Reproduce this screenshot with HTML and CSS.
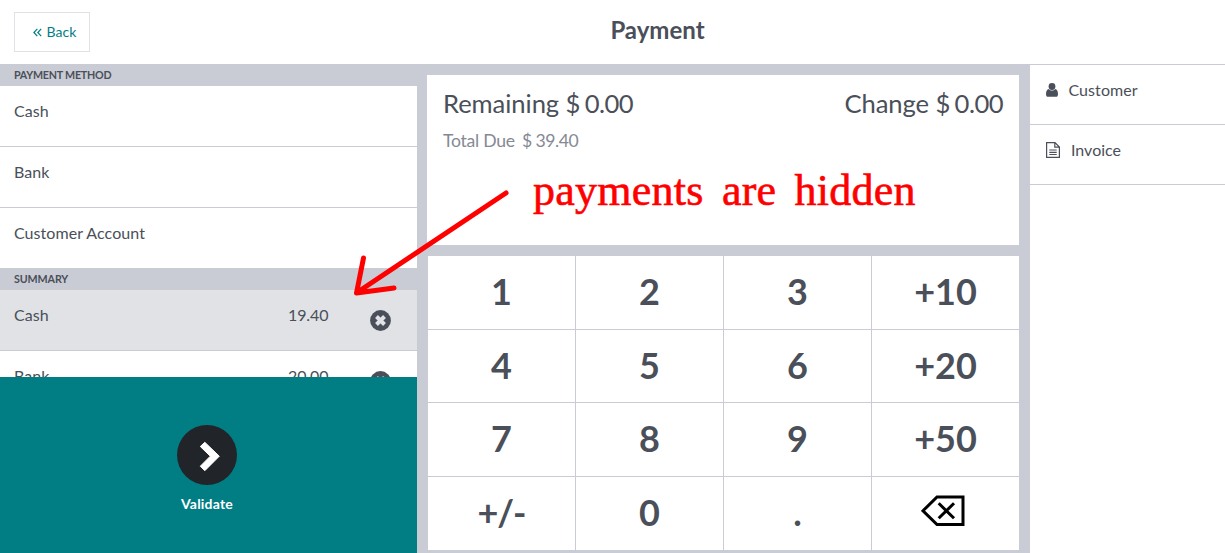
FILE: index.html
```html
<!DOCTYPE html>
<html lang="en">
<head>
<meta charset="utf-8">
<title>Payment</title>
<link rel="stylesheet" href="styles.css">
</head>
<body>
<div class="screen">
  <header class="topbar">
    <button class="back"><svg class="chevrons" width="9" height="9" viewBox="0 0 9 9"><path d="M4.3.8.9 4.5l3.400 3.700M8.2.8 4.8 4.5l3.400 3.700"/></svg><span>Back</span></button>
    <h1 class="title">Payment</h1>
  </header>
  <main class="content">
    <section class="left">
      <div class="scroll">
        <h2 class="heading">PAYMENT METHOD</h2>
        <div class="row">Cash</div>
        <div class="row">Bank</div>
        <div class="row last">Customer Account</div>
        <h2 class="heading summary">SUMMARY</h2>
        <div class="row selected"><span class="name">Cash</span><span class="amount">19.40</span>
          <svg class="remove" width="22" height="22" viewBox="0 0 22 22"><circle cx="11.500" cy="11.500" r="10.4"/><path d="m7.500 7.500 8 8m0-8-8 8"/></svg></div>
        <div class="row"><span class="name">Bank</span><span class="amount">20.00</span>
          <svg class="remove" width="22" height="22" viewBox="0 0 22 22"><circle cx="11.500" cy="11.500" r="10.4"/><path d="m7.500 7.500 8 8m0-8-8 8"/></svg></div>
      </div>
      <button class="validate">
        <svg width="60" height="60" viewBox="0 0 60 60"><circle cx="30" cy="30" r="30" fill="#212529"/><path d="M27.8 17.3 42.3 31.2 27.8 45.7 23.3 41.2 33.3 31.2 23.3 21.5Z" fill="#fff" stroke="#fff" stroke-linejoin="round"/></svg>
        <span>Validate</span>
      </button>
    </section>
    <section class="center">
      <div class="status">
        <div class="totals"><span>Remaining <b>$ 0.00</b></span><span>Change <b>$ 0.00</b></span></div>
        <div class="due">Total Due <b>$ 39.40</b></div>
      </div>
      <div class="numpad">
        <button>1</button><button>2</button><button>3</button><button>+10</button>
        <button>4</button><button>5</button><button>6</button><button>+20</button>
        <button>7</button><button>8</button><button>9</button><button>+50</button>
        <button class="sign">+/-</button><button>0</button><button>.</button>
        <button><svg class="erase" width="44" height="32" viewBox="0 0 44 32"><path d="M16 2H42V29.5H16L2 15.8Z"/><path d="m17.7 8.3 15.3 15m0-15-15.3 15"/></svg></button>
      </div>
    </section>
    <aside class="right">
      <div class="option"><svg width="12" height="14" viewBox="0 0 12 14"><circle cx="6" cy="3.5" r="3.4"/><path d="M2.9 6C.8 6.200 0 8.500 0 11c0 2 .8 2.800 2.200 2.800h7.600c1.400 0 2.200-.8 2.200-2.800 0-2.500-.8-4.800-2.900-5C8.300 7 7.200 7.500 6 7.500S3.700 7 2.900 6Z"/></svg><span>Customer</span></div>
      <div class="option invoice"><svg width="14" height="16" viewBox="0 0 14 16"><path class="line" d="M.6.6H9L13.400 5V15.400H.6ZM8.800.6V5.200H13.400M3.300 8h7.400M3.300 10.300h7.400M3.300 12.500h7.400"/></svg><span>Invoice</span></div>
    </aside>
  </main>
  <div class="note">
    <svg width="170" height="120" viewBox="0 0 170 120"><path d="M163 8 14 107.500M20.500 73 13.500 108 51 103"/></svg>
    <span>payments are hidden</span>
  </div>
</div>
</body>
</html>
```
FILE: styles.css
```css
* { box-sizing: border-box; }
body { margin: 0; font-family: Lato, sans-serif; font-size: 16px; color: #4a4f59; }
button { font: inherit; color: inherit; border: 0; padding: 0; margin: 0; background: #fff; }
svg { display: block; flex: none; }
.screen { position: relative; width: 1225px; height: 553px; overflow: hidden; background: #fff; display: flex; flex-direction: column; }
.topbar { height: 64px; flex: none; padding: 12px 0 12px 14px; display: grid; grid-template-columns: 76px 1fr; }
.back { height: 40px; border: 1px solid #e0e2e6; color: #017e84; font-size: 14px; line-height: 18px; display: flex; align-items: center; justify-content: center; gap: 4px; padding: 0 0 0 6px; letter-spacing: .1px; }
.chevrons { fill: none; stroke: currentColor; stroke-width: 1.2; }
.title { margin: 0; font-size: 24px; line-height: 36px; font-weight: 700; text-align: center; }
.content { flex: 1; min-height: 0; display: grid; grid-template-columns: 417px 613px 195px; border-top: 1px solid #c9ccd4; }
.left { display: flex; flex-direction: column; min-height: 0; }
.scroll { height: 312px; overflow: hidden; }
.heading { margin: 0; height: 21px; padding-left: 14px; font-size: 10.7px; line-height: 19px; letter-spacing: -.22px; font-weight: 700; background: #c9ccd4; }
.summary { height: 22px; line-height: 22px; letter-spacing: -.1px; }
.row { display: flex; height: 61px; padding: 15px 26px 0 14px; line-height: 20px; letter-spacing: .06px; border-bottom: 1px solid #c9ccd4; }
.last { height: 60px; border: 0; }
.selected { background: #e0e2e6; }
.name { flex: 1; }
.amount { width: 81px; letter-spacing: -.1px; }
.remove { margin-top: 4px; fill: #4a4f59; overflow: visible; }
.remove path { stroke: #e0e2e6; stroke-width: 4; }
.validate { flex: 1; display: flex; flex-direction: column; align-items: center; padding-top: 48px; padding-right: 3px; gap: 10px; background: #017e84; color: #fff; font-size: 14px; line-height: 18px; font-weight: 700; letter-spacing: .2px; }
.center { background: #c9ccd4; padding: 10px 11px 3px 10px; display: flex; flex-direction: column; gap: 11px; }
.center b { font-weight: inherit; letter-spacing: -.55px; word-spacing: -1.2px; }
.status { height: 170px; padding: 12px 16px; background: #fff; }
.totals { display: flex; justify-content: space-between; font-size: 25.6px; line-height: 32px; letter-spacing: -.06px; }
.due { margin-top: 11px; font-size: 17.6px; line-height: 22px; letter-spacing: -.25px; color: #858994; }
.due b { margin-left: 3px; letter-spacing: -.4px; word-spacing: -.6px; }
.numpad { flex: 1; margin-left: 1px; display: grid; grid-template-columns: repeat(4, 147px); grid-template-rows: 73px 72px 73px 73px; gap: 1px; }
.numpad button { display: flex; align-items: center; justify-content: center; padding-bottom: 3px; font-size: 36px; line-height: 44px; font-weight: 700; }
.numpad .sign { letter-spacing: -1px; }
.erase { margin-top: -3px; margin-right: 5px; fill: none; stroke: #000; stroke-width: 3; }
.option { height: 60px; padding: 15px 16px; display: flex; gap: 10.4px; line-height: 20px; letter-spacing: .1px; border-bottom: 1px solid #c9ccd4; }
.option svg { margin-top: 3px; fill: #4a4f59; }
.option svg .line { fill: none; stroke: #4a4f59; stroke-width: 1.2; }
.invoice { gap: 11px; letter-spacing: 0; }
.invoice svg { margin-top: 2px; }
.note { position: absolute; left: 343px; top: 185px; color: red; font: 44px/44px "Liberation Serif", serif; }
.note svg { fill: none; stroke: red; stroke-width: 5; stroke-linecap: round; stroke-linejoin: round; }
.note span { position: absolute; left: 190px; top: -16px; white-space: nowrap; letter-spacing: .25px; word-spacing: 7px; -webkit-text-stroke: .6px red; }
```
